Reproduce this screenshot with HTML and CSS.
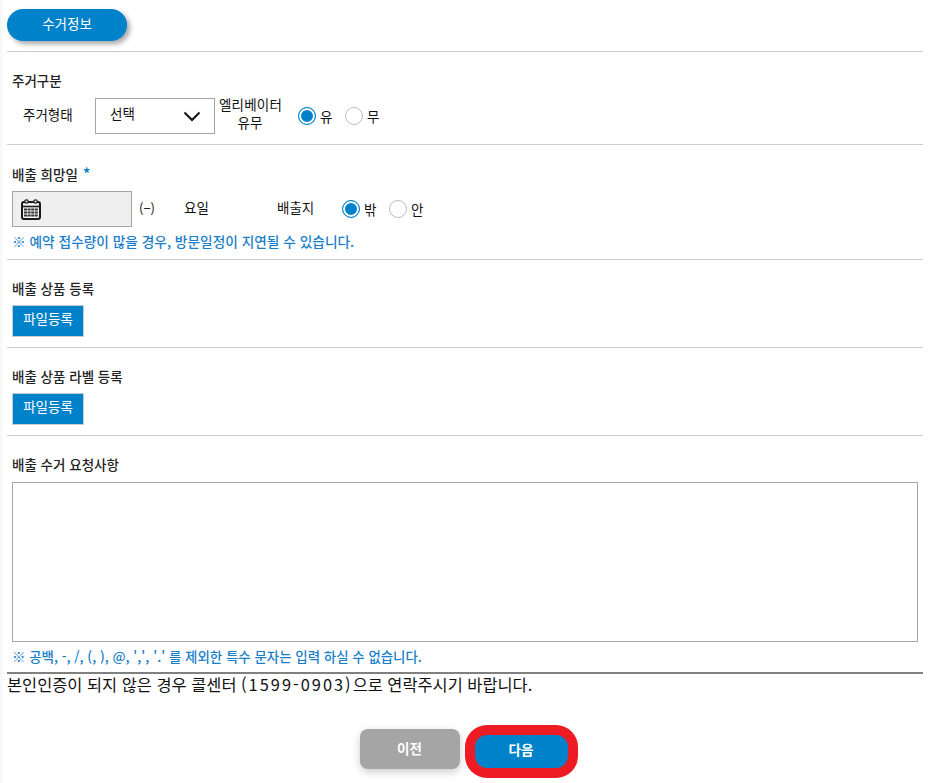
FILE: index.html
```html
<!DOCTYPE html>
<html lang="ko">
<head>
<meta charset="utf-8">
<title>수거정보</title>
<link rel="stylesheet" href="styles.css">
</head>
<body>
<div class="page">
  <div class="head"><span class="pill">수거정보</span></div>
  <section class="sec sec-type">
    <h3 class="label">주거구분</h3>
    <div class="row">
      <span class="type-label">주거형태</span>
      <div class="select"><span>선택</span>
        <svg class="chev" width="18" height="11" viewBox="0 0 18 11"><path d="M1.500 1.500 9 9l7.500-7.500" fill="none" stroke="#111" stroke-width="2"/></svg>
      </div>
      <span class="elev">엘리베이터<br>유무</span>
      <span class="radio on"></span><span class="rtext">유</span>
      <span class="radio"></span><span class="rtext">무</span>
    </div>
  </section>
  <section class="sec sec-date">
    <h3 class="label">배출 희망일 <em class="star">*</em></h3>
    <div class="row">
      <div class="date">
        <svg width="20" height="21" viewBox="0 0 20 21"><rect x="1" y="3" width="18" height="17" rx="2" fill="#f4f4f4" stroke="#1a1a1a" stroke-width="2"/><path d="M1 7.500h18" stroke="#1a1a1a" stroke-width="1.600"/><circle cx="5.500" cy="2.500" r="1.700" fill="#efefef" stroke="#1a1a1a" stroke-width="1.200"/><circle cx="14.500" cy="2.500" r="1.700" fill="#efefef" stroke="#1a1a1a" stroke-width="1.200"/><path d="M3 10.500h14M3 13.500h14M3 16.500h14" stroke="#333" stroke-width="1.800" stroke-dasharray="3 .6"/></svg>
      </div>
      <span class="dash">(−)</span>
      <span class="day">요일</span>
      <span class="place">배출지</span>
      <span class="radio on"></span><span class="rtext">밖</span>
      <span class="radio"></span><span class="rtext">안</span>
    </div>
    <p class="note">※ 예약 접수량이 많을 경우, 방문일정이 지연될 수 있습니다.</p>
  </section>
  <section class="sec sec-file">
    <h3 class="label">배출 상품 등록</h3>
    <button class="file" type="button">파일등록</button>
  </section>
  <section class="sec sec-file">
    <h3 class="label">배출 상품 라벨 등록</h3>
    <button class="file" type="button">파일등록</button>
  </section>
  <section class="sec sec-memo">
    <h3 class="label">배출 수거 요청사항</h3>
    <div class="memo"></div>
    <p class="note note2">※ 공백, -, /, (, ), @, ',', '.' 를 제외한 특수 문자는 입력 하실 수 없습니다.</p>
  </section>
  <p class="notice">본인인증이 되지 않은 경우 콜센터 <span class="num">(1599-0903)</span>으로 연락주시기 바랍니다.</p>
  <div class="actions">
    <button class="btn prev" type="button">이전</button>
    <button class="btn next" type="button">다음</button>
  </div>
</div>
</body>
</html>
```
FILE: styles.css
```css
* { box-sizing: border-box; }
html, body { margin: 0; padding: 0; }
body { background: linear-gradient(to right, #f6f6f6, #fff 5px); font-family: "Noto Sans CJK KR", "Noto Sans", sans-serif; color: #111; font-size: 13.5px; }
.page { width: 916px; margin-left: 7px; height: 783px; overflow: hidden; }
.head { height: 52px; padding: 9px 8px 0 0; border-bottom: 1px solid #ccc; }
.pill { display: flex; align-items: center; justify-content: center; width: 120px; height: 32px; padding-bottom: 4px; border-radius: 16px; background: #0082ca; color: #fff; font-size: 13.5px; box-shadow: 3px 3px 5px rgba(0,0,0,.35); }
.sec { border-bottom: 1px solid #ccc; padding-left: 5px; }
.label { margin: 0; font-size: 13.500px; font-weight: 500; line-height: 18px; color: #222; }
.star { font-style: normal; font-size: 16px; line-height: 0; color: #0082ca; margin-left: 1px; }
.row { display: flex; align-items: center; }
.sec-type { height: 93px; padding-top: 19px; }
.sec-type .row { margin-top: 9px; height: 36px; }
.type-label { width: 83px; padding-left: 11px; padding-bottom: 4px; }
.select { width: 120px; height: 36px; border: 1px solid #a5a5a5; display: flex; align-items: center; justify-content: space-between; padding: 0 13px 0 14px; }
.select span { padding-bottom: 6px; }
.elev { width: 62px; margin-left: 4px; margin-right: 17px; padding-bottom: 6px; text-align: center; line-height: 18px; white-space: nowrap; letter-spacing: .2px; }
.radio { width: 18px; height: 18px; border-radius: 50%; border: 1px solid #bbb; background: #fff; flex: none; }
.radio.on { border-color: #0082ca; background: #0082ca; box-shadow: inset 0 0 0 2px #fff; }
.rtext { margin-left: 4px; width: 25px; }
.sec-date { height: 115px; padding-top: 20px; }
.sec-date .row { margin-top: 8px; height: 36px; }
.date { width: 120px; height: 36px; background: #efefef; border: 1px solid #a5a5a5; padding: 7px 0 0 8px; }
.date svg { display: block; }
.dash { width: 45px; margin-left: 7px; font-size: 13px; padding-bottom: 4px; }
.day { width: 93px; padding-bottom: 4px; }
.place { width: 65px; padding-bottom: 4px; }
.note { margin: 5px 0 0; font-size: 13.700px; font-weight: 500; line-height: 18px; color: #1a7fc9; }
.sec-file { height: 88px; padding-top: 19px; }
.file { display: block; margin-top: 8px; width: 72px; height: 32px; border: 1px solid #ccc; background: #0082ca; color: #fff; font: 13.500px "Noto Sans CJK KR", sans-serif; padding: 0 0 6px; }
.sec-memo { height: 238px; padding-top: 19px; border-bottom: 2px solid #808080; }
.memo { margin-top: 9px; width: 906px; height: 160px; border: 1px solid #a5a5a5; }
.note2 { margin-top: 5px; font-size: 13.440px; }
.notice { margin: 0; font-size: 16.400px; line-height: 20px; color: #111; white-space: nowrap; }
.num { letter-spacing: 2px; }
.actions { display: flex; justify-content: center; align-items: flex-start; gap: 15px; margin-top: 35px; padding-right: 3px; }
.btn { border: 0; color: #fff; font: 700 13.500px "Noto Sans CJK KR", sans-serif; padding: 0 0 3px; }
.prev { width: 100px; height: 40px; border-radius: 8px; background: #a5a5a5; box-shadow: 0 3px 8px rgba(0,0,0,.2); }
.next { width: 93px; height: 33px; margin-top: 6px; padding-bottom: 5px; border-radius: 12px; background: #0082ca; box-shadow: 0 0 0 10px #ed1c24; }
```
